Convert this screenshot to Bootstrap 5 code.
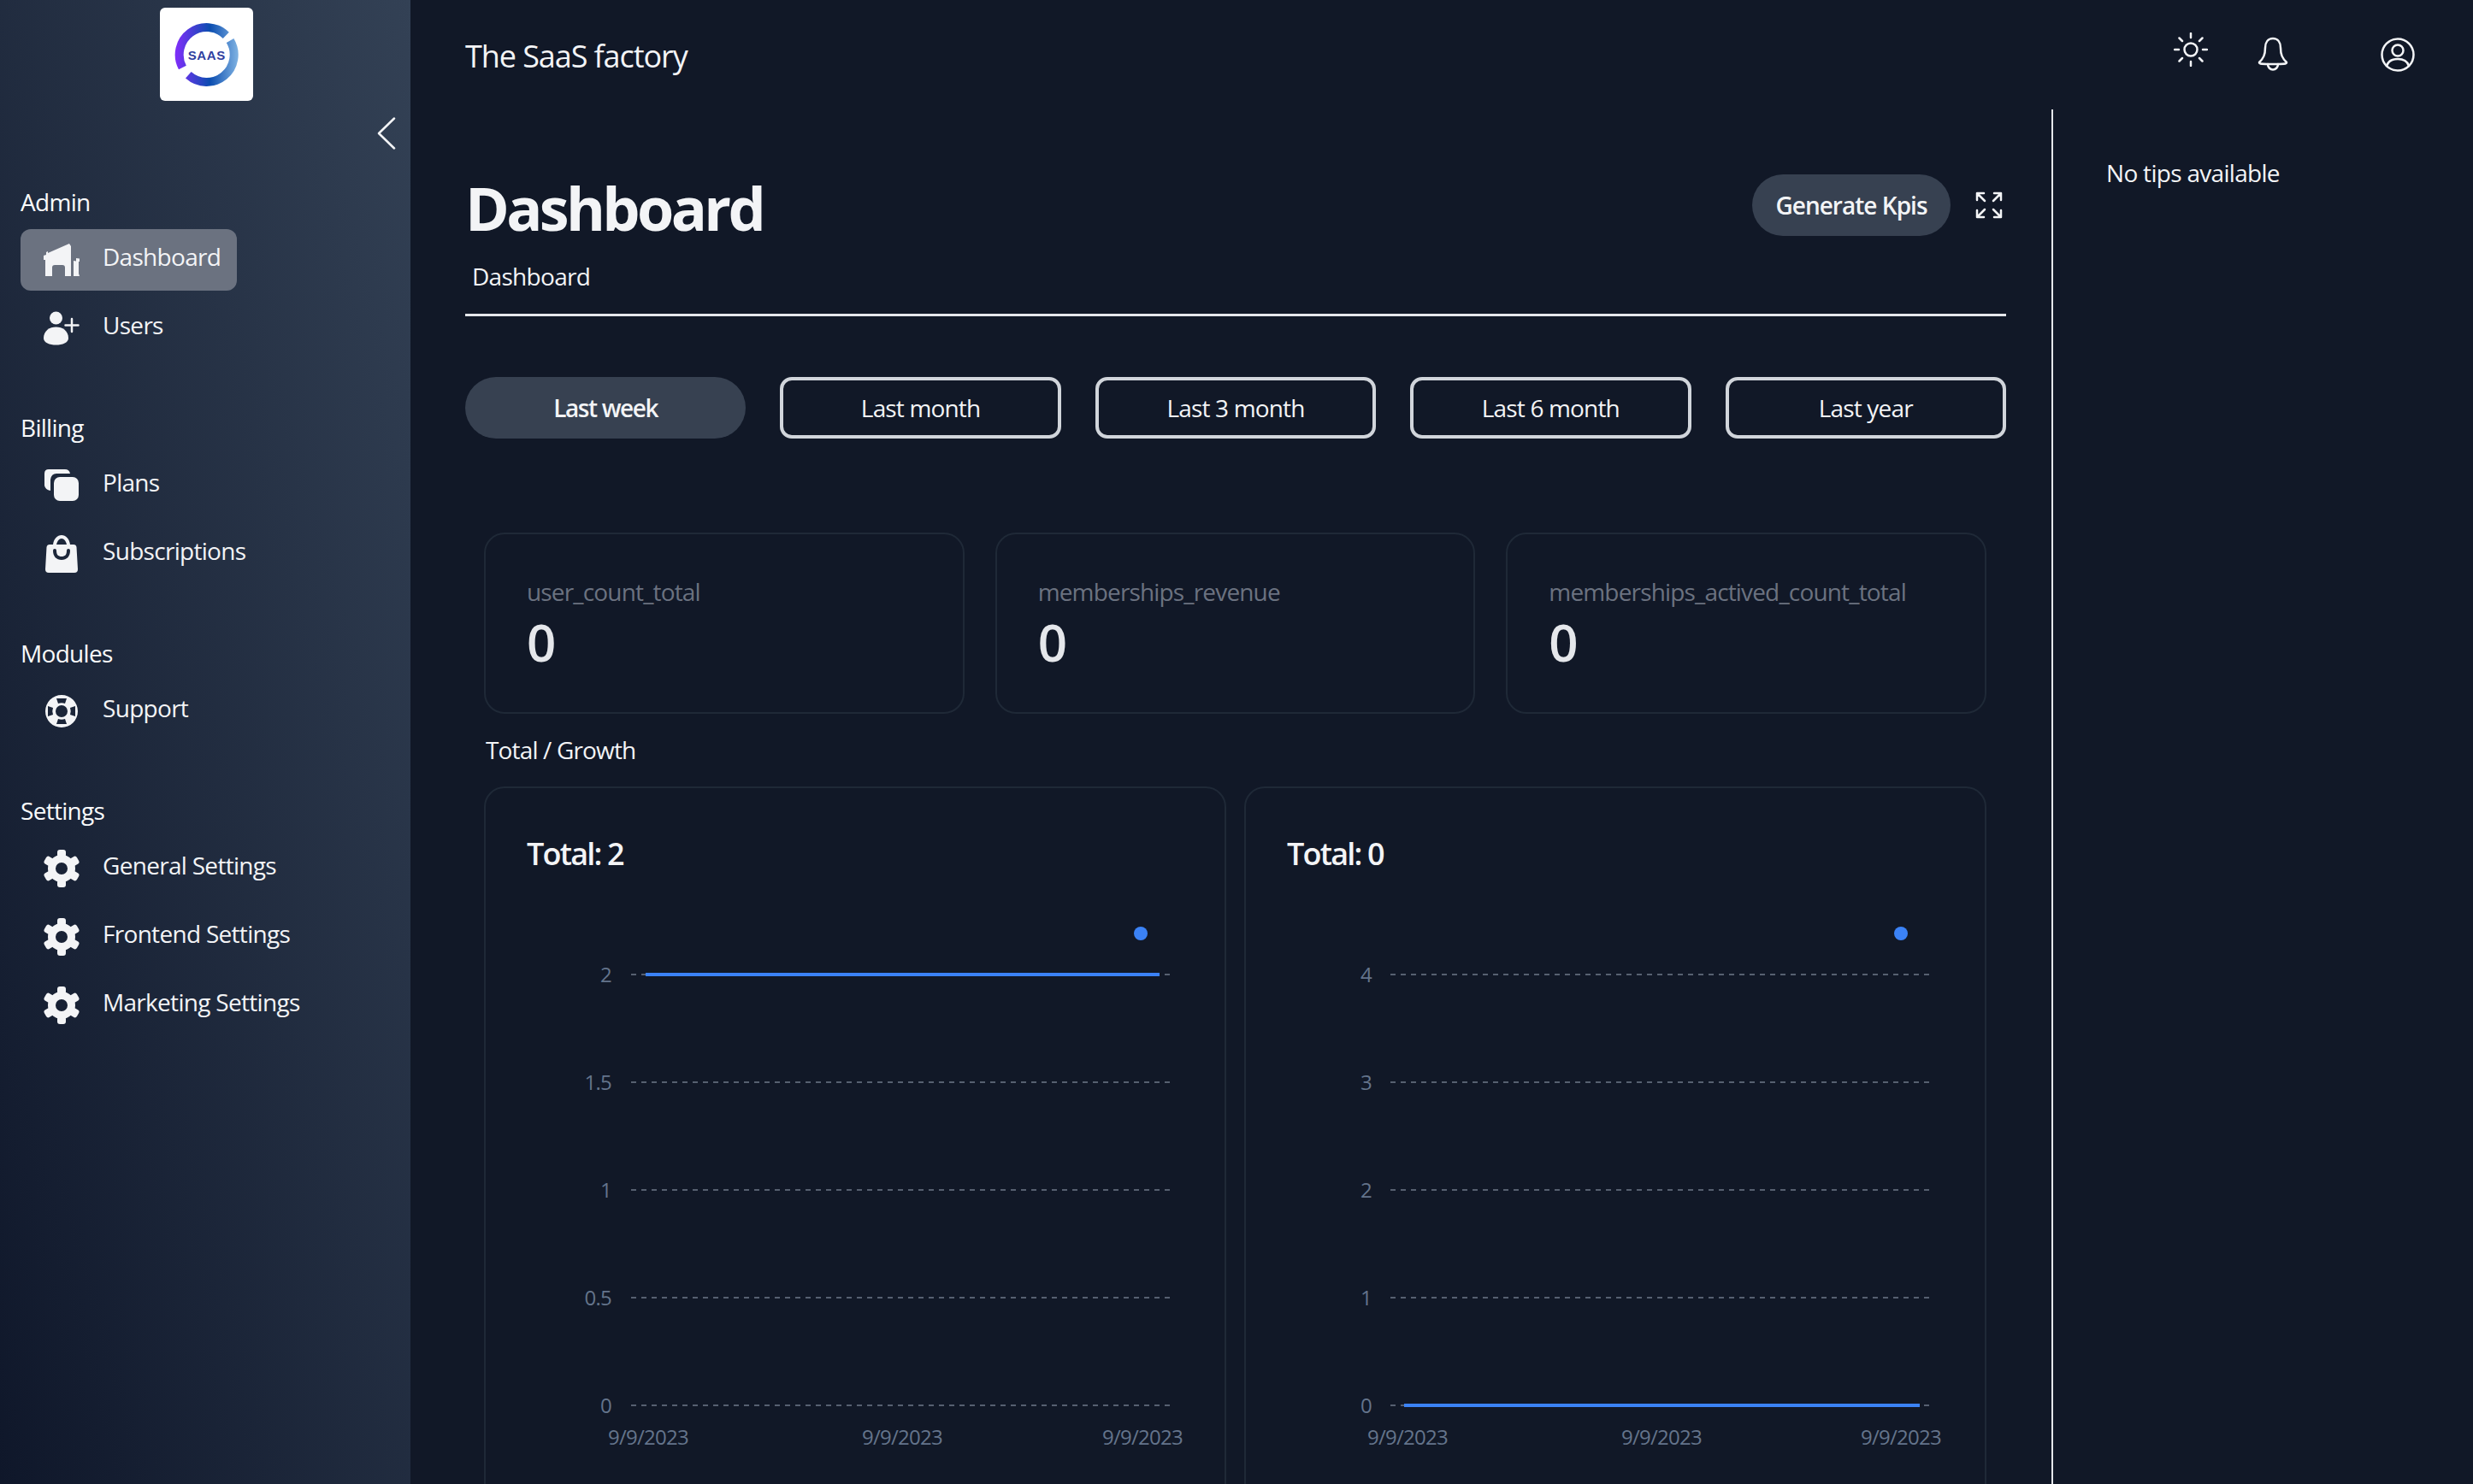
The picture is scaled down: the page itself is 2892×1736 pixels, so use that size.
<!DOCTYPE html>
<html lang="en">
<head>
<meta charset="UTF-8">
<title>The SaaS factory</title>
<link href="https://cdn.jsdelivr.net/npm/bootstrap@5.3.0/dist/css/bootstrap.min.css" rel="stylesheet">
<style>
html, body { height: 100%; }
body { background: #111827; color: #f3f4f6; font-family: "Open Sans", "Noto Sans", sans-serif; font-size: 28px; letter-spacing: -0.025em; overflow: hidden; }
.app-shell { height: 100vh; overflow: hidden; }
.side-panel { width: 480px; flex: none; background: linear-gradient(to top right, #0f172a, #334155); padding: 9px 24px 0; }
.logo-box { width: 109px; height: 109px; margin-left: 163px; background: #fff; border-radius: 6px; }
.logo-box text { font-family: "Liberation Sans", sans-serif; font-weight: 700; font-size: 15px; letter-spacing: 0.6px; fill: #2f3f9f; }
.side-toggle { height: 38px; margin: 19px -8px 41px 0; }
.side-group { margin-bottom: 60px; }
.side-label { height: 40px; line-height: 40px; margin-bottom: 12px; color: #f9fafb; }
.side-item { display: inline-flex; align-self: flex-start; align-items: center; gap: 26px; height: 72px; padding: 0 19px 0 26px; margin-bottom: 8px; border-radius: 12px; color: #f3f4f6; }
.side-item:last-child { margin-bottom: 0; }
.side-item.active { background: #6b7280; color: #f3f4f6; }
.side-item span { margin-bottom: 8px; white-space: nowrap; }
.side-icon { width: 44px; height: 44px; flex: none; fill: #f3f4f6; }
.top-bar { height: 128px; flex: none; padding: 0 68px 0 64px; }
.top-title { font-size: 36px; color: #f3f4f6; letter-spacing: -0.03em; margin-top: 4px; }
.ico-line { fill: none; stroke: #f3f4f6; stroke-width: 2.5; stroke-linecap: round; stroke-linejoin: round; }
.ico-sun { width: 40px; height: 40px; margin: 0 58px 12px 0; }
.ico-bell { width: 36px; height: 40px; margin: 0 108px 2px 0; }
.ico-user { width: 40px; height: 40px; }
.work-row { min-height: 0; }
.main-col { width: 1919px; flex: none; padding: 76px 53px 0 64px; }
.tips-col { border-left: 2px solid #e5e7eb; padding: 54px 0 0 62px; line-height: 40px; }
.page-title { font-size: 70px; line-height: 66px; padding-top: 6px; font-weight: 700; margin: 0; letter-spacing: -0.052em; color: #f3f4f6; }
.head-btn { width: 232px; height: 72px; padding: 0; border: 0; border-radius: 36px; background: #374151; color: #f3f4f6; font-size: 28px; font-weight: 600; letter-spacing: -0.035em; }
.head-expand { margin-left: 29px; }
.crumb-text { margin: 27px 0 0 8px; line-height: 40px; padding-bottom: 24px; }
.head-rule { height: 3px; background: #e5e7eb; margin-bottom: 71px; }
.range-row { display: grid; grid-template-columns: repeat(5, 1fr); gap: 40px; margin-bottom: 110px; }
.range-btn { height: 72px; padding: 0; background: transparent; border: 4px solid #d1d5db; border-radius: 14px; color: #f3f4f6; font-size: 28px; letter-spacing: -0.03em; }
.range-btn.on { background: #374151; border: 0; border-radius: 36px; font-weight: 600; letter-spacing: -0.05em; }
.kpi-area { padding: 0 23px 0 22px; letter-spacing: -0.03em; }
.stat-grid { display: grid; grid-template-columns: repeat(3, 1fr); gap: 36px; }
.chart-grid { display: grid; grid-template-columns: 1fr 1fr; gap: 21px; }
.kpi-card { background: transparent; border: 2px solid #1f2937; border-radius: 24px; }
.stat-card { height: 212px; padding: 47px 48px 0; }
.stat-name { color: #6b7280; line-height: 40px; }
.stat-value { color: #e5e7eb; font-size: 60px; line-height: 66px; font-weight: 600; margin-top: 6px; }
.group-title { height: 85px; padding: 22px 0 0 2px; line-height: 40px; }
.chart-title { margin: 52px 0 0 48px; height: 66px; line-height: 50px; font-size: 36px; font-weight: 600; color: #f3f4f6; letter-spacing: -0.05em; }
.chart-svg { display: block; flex: none; width: 865px; height: 720px; }
.chart-svg text { font-size: 24px; fill: #64748b; letter-spacing: -0.03em; }
.chart-svg line.grid-line { stroke: #566070; stroke-width: 2; stroke-dasharray: 6 6; }
.chart-svg line.data-line { stroke: #3b82f6; stroke-width: 4; }
.chart-svg circle { fill: #3b82f6; }
</style>
</head>
<body>
<svg width="0" height="0" class="position-absolute">
    <symbol id="gear" viewBox="0 0 44 44">
        <circle cx="22" cy="22" r="11.5" fill="none" stroke="#f3f4f6" stroke-width="9"/>
        <rect x="17" y="0" width="10" height="9" rx="3"/>
        <rect x="17" y="0" width="10" height="9" rx="3" transform="rotate(60 22 22)"/>
        <rect x="17" y="0" width="10" height="9" rx="3" transform="rotate(120 22 22)"/>
        <rect x="17" y="0" width="10" height="9" rx="3" transform="rotate(180 22 22)"/>
        <rect x="17" y="0" width="10" height="9" rx="3" transform="rotate(240 22 22)"/>
        <rect x="17" y="0" width="10" height="9" rx="3" transform="rotate(300 22 22)"/>
    </symbol>
</svg>
<div class="app-shell d-flex">
    <aside class="side-panel d-flex flex-column">
        <div class="logo-box">
            <svg width="109" height="109" viewBox="0 0 109 109">
                <defs>
                    <linearGradient id="ringGrad" gradientUnits="userSpaceOnUse" x1="20" y1="0" x2="90" y2="0">
                        <stop offset="0" stop-color="#7b2ff7"/>
                        <stop offset="0.55" stop-color="#0b4db0"/>
                        <stop offset="1" stop-color="#7aaee0"/>
                    </linearGradient>
                </defs>
                <path d="M26.4 70A32 32 0 0 1 77.3 32.4M33.3 78.8A32 32 0 0 0 82.1 38.5" fill="none" stroke="url(#ringGrad)" stroke-width="10"/>
                <text x="54.7" y="60.5" text-anchor="middle">SAAS</text>
            </svg>
        </div>
        <div class="side-toggle d-flex justify-content-end">
            <svg width="24" height="38" viewBox="0 0 24 38"><path class="ico-line" stroke-width="3" d="M21 1.5 3 19l18 17.5"/></svg>
        </div>
        <nav class="side-group nav flex-column">
            <div class="side-label">Admin</div>
            <a class="side-item active text-decoration-none" href="#">
                <svg class="side-icon" viewBox="0 0 44 44"><path d="M1 17l3-1v-3l2-1v2L31 3l2 3v35h-7V31q0-3-3-3h-9q-3 0-3 3v10H3V22H1zM36 23l3 .5V20l4 .5V24h-1v14l1 3h-7z"/></svg>
                <span>Dashboard</span>
            </a>
            <a class="side-item text-decoration-none" href="#">
                <svg class="side-icon" viewBox="0 0 44 44"><circle cx="15.5" cy="10" r="7.5"/><path d="M1 33.5C1 25 8 20.5 15.5 20.5S30 25 30 33.5C30 39 23 41.5 15.5 41.5S1 39 1 33.5Z"/><path class="ico-line" stroke-width="3.5" d="M26.5 18.500h15M34 11v15"/></svg>
                <span>Users</span>
            </a>
        </nav>
        <nav class="side-group nav flex-column">
            <div class="side-label">Billing</div>
            <a class="side-item text-decoration-none" href="#">
                <svg class="side-icon" viewBox="0 0 44 44"><path d="M7 3h19q5 0 6 5H16q-6 0-7 7v13q-6-1-7-6V8q0-5 5-5Z"/><rect x="13" y="12" width="29" height="28" rx="7"/></svg>
                <span>Plans</span>
            </a>
            <a class="side-item text-decoration-none" href="#">
                <svg class="side-icon" viewBox="0 0 44 44"><path fill-rule="evenodd" d="M12 11C13 4 17 0 22 0s9 4 10 11h4q3 0 3.500 3L41 40q0 4-4 4H7q-4 0-4-4l1.500-26Q5 11 8 11Zm4 0h12c-1-4-3-7-6-7s-5 3-6 7Zm-2 5q-2 0-2 2c0 7 4 11 10 11s10-4 10-11q0-2-2-2t-2 2c0 5-2 7-6 7s-6-2-6-7q0-2-2-2Z"/></svg>
                <span>Subscriptions</span>
            </a>
        </nav>
        <nav class="side-group nav flex-column">
            <div class="side-label">Modules</div>
            <a class="side-item text-decoration-none" href="#">
                <svg class="side-icon" viewBox="0 0 44 44"><path fill-rule="evenodd" d="M22 3a19 19 0 1 0 0 38 19 19 0 0 0 0-38Zm0 12a7 7 0 1 1 0 14 7 7 0 0 1 0-14ZM16 7h12l-2 6q-4-1.500-8 0ZM16 37h12l-2-6q-4 1.500-8 0ZM6 16v12l6-2q-1.500-4 0-8ZM38 16v12l-6-2q1.500-4 0-8Z"/></svg>
                <span>Support</span>
            </a>
        </nav>
        <nav class="side-group nav flex-column">
            <div class="side-label">Settings</div>
            <a class="side-item text-decoration-none" href="#"><svg class="side-icon"><use href="#gear"/></svg><span>General Settings</span></a>
            <a class="side-item text-decoration-none" href="#"><svg class="side-icon"><use href="#gear"/></svg><span>Frontend Settings</span></a>
            <a class="side-item text-decoration-none" href="#"><svg class="side-icon"><use href="#gear"/></svg><span>Marketing Settings</span></a>
        </nav>
    </aside>

    <div class="flex-grow-1 d-flex flex-column">
        <header class="top-bar d-flex align-items-center">
            <div class="top-title me-auto">The SaaS factory</div>
            <svg class="ico-sun" viewBox="0 0 40 40"><g class="ico-line"><circle cx="20" cy="20" r="7.500"/><path d="M20 1v5M20 34v5M1 20h5M34 20h5M6.500 6.500l3.500 3.500M30 30l3.500 3.500M6.500 33.500 10 30M30 10l3.500-3.500"/></g></svg>
            <svg class="ico-bell" viewBox="0 0 36 40"><g class="ico-line"><path d="M18 2c-6 0-9 5-9 11 0 8-2 12-7 17 0 2 3 2 16 2s16 0 16-2c-5-5-7-9-7-17 0-6-3-11-9-11Z"/><path d="M12 32c0 4 3 6.500 6 6.500s6-2.500 6-6.500"/></g></svg>
            <svg class="ico-user" viewBox="0 0 40 40"><g class="ico-line"><circle cx="20" cy="20" r="18.500"/><circle cx="20" cy="15" r="6.500"/><path d="M7 33c2-6 7-8 13-8s11 2 13 8"/></g></svg>
        </header>
        <div class="work-row d-flex flex-grow-1">
            <main class="main-col">
                <div class="d-flex align-items-center justify-content-between">
                    <h1 class="page-title">Dashboard</h1>
                    <div class="d-flex align-items-center me-1">
                        <button class="head-btn btn" type="button">Generate Kpis</button>
                        <svg class="head-expand" width="32" height="32" viewBox="0 0 32 32"><path class="ico-line" stroke-width="3" d="M2 10V2h8M2 2l9 9M30 10V2h-8M30 2l-9 9M2 22v8h8M2 30l9-9M30 22v8h-8M30 30l-9-9"/></svg>
                    </div>
                </div>
                <div class="crumb-text">Dashboard</div>
                <div class="head-rule"></div>
                <div class="range-row">
                    <button class="range-btn on btn" type="button">Last week</button>
                    <button class="range-btn btn" type="button">Last month</button>
                    <button class="range-btn btn" type="button">Last 3 month</button>
                    <button class="range-btn btn" type="button">Last 6 month</button>
                    <button class="range-btn btn" type="button">Last year</button>
                </div>
                <div class="kpi-area">
                    <div class="stat-grid">
                        <div class="card kpi-card stat-card"><div class="stat-name">user_count_total</div><div class="stat-value">0</div></div>
                        <div class="card kpi-card stat-card"><div class="stat-name">memberships_revenue</div><div class="stat-value">0</div></div>
                        <div class="card kpi-card stat-card"><div class="stat-name">memberships_actived_count_total</div><div class="stat-value">0</div></div>
                    </div>
                    <div class="group-title">Total / Growth</div>
                    <div class="chart-grid">
                        <div class="card kpi-card">
                            <div class="chart-title">Total: 2</div>
                            <svg class="chart-svg" viewBox="0 0 865 720">
                                <circle cx="766" cy="52" r="8"/>
                                <line class="grid-line" x1="170" x2="800" y1="100" y2="100"/>
                                <line class="grid-line" x1="170" x2="800" y1="226" y2="226"/>
                                <line class="grid-line" x1="170" x2="800" y1="352" y2="352"/>
                                <line class="grid-line" x1="170" x2="800" y1="478" y2="478"/>
                                <line class="grid-line" x1="170" x2="800" y1="604" y2="604"/>
                                <line class="data-line" x1="187" x2="788" y1="100" y2="100"/>
                                <g text-anchor="end">
                                    <text x="147" y="109">2</text><text x="147" y="235">1.5</text><text x="147" y="361">1</text><text x="147" y="487">0.5</text><text x="147" y="613">0</text>
                                </g>
                                <g text-anchor="middle">
                                    <text x="190" y="650">9/9/2023</text><text x="487" y="650">9/9/2023</text><text x="768" y="650">9/9/2023</text>
                                </g>
                            </svg>
                        </div>
                        <div class="card kpi-card">
                            <div class="chart-title">Total: 0</div>
                            <svg class="chart-svg" viewBox="0 0 865 720">
                                <circle cx="766" cy="52" r="8"/>
                                <line class="grid-line" x1="169" x2="799" y1="100" y2="100"/>
                                <line class="grid-line" x1="169" x2="799" y1="226" y2="226"/>
                                <line class="grid-line" x1="169" x2="799" y1="352" y2="352"/>
                                <line class="grid-line" x1="169" x2="799" y1="478" y2="478"/>
                                <line class="grid-line" x1="169" x2="799" y1="604" y2="604"/>
                                <line class="data-line" x1="185" x2="788" y1="604" y2="604"/>
                                <g text-anchor="end">
                                    <text x="147" y="109">4</text><text x="147" y="235">3</text><text x="147" y="361">2</text><text x="147" y="487">1</text><text x="147" y="613">0</text>
                                </g>
                                <g text-anchor="middle">
                                    <text x="189" y="650">9/9/2023</text><text x="486" y="650">9/9/2023</text><text x="766" y="650">9/9/2023</text>
                                </g>
                            </svg>
                        </div>
                    </div>
                </div>
            </main>
            <aside class="tips-col flex-grow-1">No tips available</aside>
        </div>
    </div>
</div>
<script src="https://cdn.jsdelivr.net/npm/bootstrap@5.3.0/dist/js/bootstrap.bundle.min.js"></script>
</body>
</html>
